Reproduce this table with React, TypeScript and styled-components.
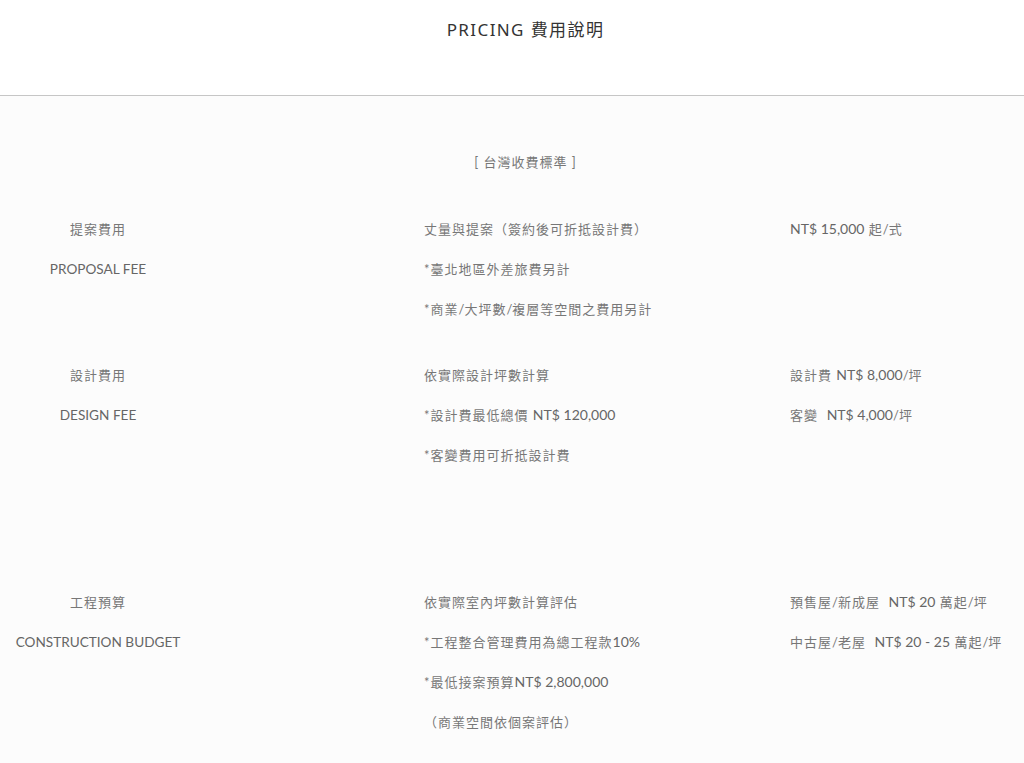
import React from "react";
import styled, { createGlobalStyle } from "styled-components";

const Global = createGlobalStyle`
  html, body { margin: 0; padding: 0; background: #fcfcfc; }
  body { font-family: Lato, "Noto Sans CJK TC", sans-serif; }
`;

const Page = styled.div`
  width: 1024px;
  min-height: 763px;
  background: #fcfcfc;
`;

const Header = styled.header`
  height: 96px;
  background: #ffffff;
  border-bottom: 1px solid #c6c6c6;
  box-sizing: border-box;
  display: flex;
  justify-content: center;
  padding-top: 18px;
  padding-left: 27px;
`;

const Title = styled.h1`
  margin: 0;
  font-family: "Noto Sans", "Noto Sans CJK TC", sans-serif;
  font-weight: 400;
  font-size: 17px;
  line-height: 24px;
  letter-spacing: 1.4px;
  color: #333;
`;

const Body = styled.main`
  padding-top: 46px;
`;

const Standard = styled.div`
  width: 1051px;
  text-align: center;
  font-size: 13px;
  line-height: 40px;
  letter-spacing: 1px;
  color: #777;
  font-family: Lato, "Noto Sans CJK TC", sans-serif;
  margin-bottom: 27px;
`;

const Row = styled.section<{ $gap: number }>`
  display: grid;
  grid-template-columns: 424px 366px 1fr;
  margin-bottom: ${(p) => p.$gap}px;
`;

const Col = styled.div``;

const LabelCol = styled.div`
  width: 196px;
  text-align: center;
`;

const Line = styled.div<{ $latin?: boolean }>`
  font-size: ${(p) => (p.$latin ? "13.6px" : "13px")};
  line-height: 40px;
  letter-spacing: ${(p) => (p.$latin ? "0" : "1px")};
  color: ${(p) => (p.$latin ? "#666" : "#777")};
  white-space: nowrap;
  font-family: Lato, "Noto Sans CJK TC", sans-serif;
`;

const Num = styled.span`
  color: #666;
  font-size: 14px;
  letter-spacing: 0;
`;

const Slash = styled.span`
  letter-spacing: 0;
`;

type RowData = {
  zh: string;
  en: string;
  desc: React.ReactNode[];
  price: React.ReactNode[];
  gap: number;
};

const S = () => <Slash>/</Slash>;

const rows: RowData[] = [
  {
    zh: "提案費用",
    en: "PROPOSAL FEE",
    desc: [
      "丈量與提案（簽約後可折抵設計費）",
      "*臺北地區外差旅費另計",
      <>*商業<S />大坪數<S />複層等空間之費用另計</>,
    ],
    price: [<><Num>NT$ 15,000</Num> 起<S />式</>],
    gap: 26,
  },
  {
    zh: "設計費用",
    en: "DESIGN FEE",
    desc: ["依實際設計坪數計算", <>*設計費最低總價 <Num>NT$ 120,000</Num></>, "*客變費用可折抵設計費"],
    price: [<>設計費 <Num>NT$ 8,000</Num><S />坪</>, <>客變&nbsp; <Num>NT$ 4,000</Num><S />坪</>],
    gap: 107,
  },
  {
    zh: "工程預算",
    en: "CONSTRUCTION BUDGET",
    desc: [
      "依實際室內坪數計算評估",
      <>*工程整合管理費用為總工程款<Num>10%</Num></>,
      <>*最低接案預算<Num>NT$ 2,800,000</Num></>,
      "（商業空間依個案評估）",
    ],
    price: [
      <>預售屋<S />新成屋&nbsp; <Num>NT$ 20</Num> 萬起<S />坪</>,
      <>中古屋<S />老屋&nbsp; <Num>NT$ 20 - 25</Num> 萬起<S />坪</>,
    ],
    gap: 0,
  },
];

export default function App() {
  return (
    <Page>
      <Global />
      <Header>
        <Title>PRICING 費用說明</Title>
      </Header>
      <Body>
        <Standard>[ 台灣收費標準 ]</Standard>
        {rows.map((r) => (
          <Row key={r.en} $gap={r.gap}>
            <Col>
              <LabelCol>
                <Line>{r.zh}</Line>
                <Line $latin>{r.en}</Line>
              </LabelCol>
            </Col>
            <Col>
              {r.desc.map((d, i) => (
                <Line key={i}>{d}</Line>
              ))}
            </Col>
            <Col>
              {r.price.map((p, i) => (
                <Line key={i}>{p}</Line>
              ))}
            </Col>
          </Row>
        ))}
      </Body>
    </Page>
  );
}
